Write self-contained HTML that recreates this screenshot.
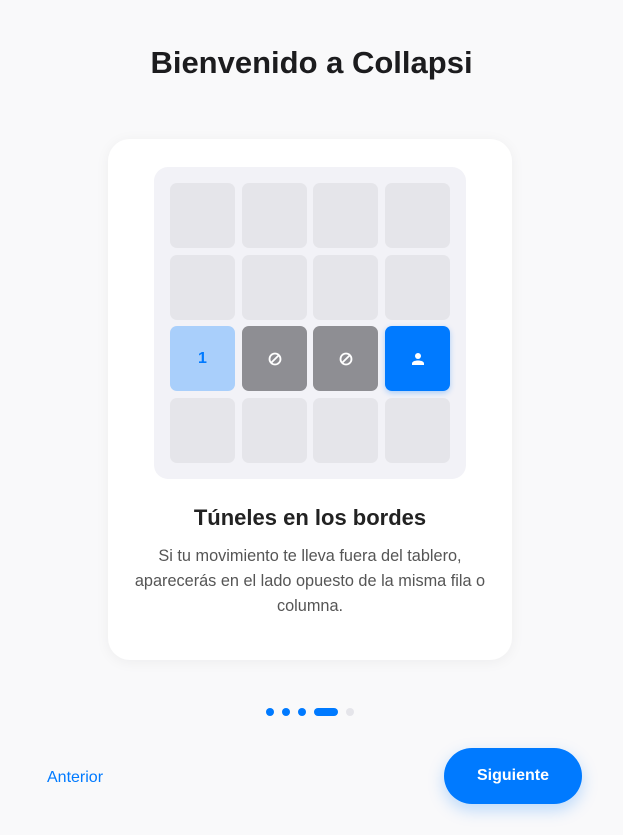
<!DOCTYPE html>
<html><head><meta charset="utf-8"><style>
*{margin:0;padding:0;box-sizing:border-box}
body{width:623px;height:835px;background:#f9f9fa;font-family:"Liberation Sans","DejaVu Sans",sans-serif;position:relative;overflow:hidden;color:#1c1c1e}
.title{position:absolute;top:45px;left:0;width:623px;text-align:center;font-size:31px;font-weight:bold}
.card{position:absolute;left:108px;top:139px;width:404px;height:521px;background:#fff;border-radius:22px;box-shadow:0 2px 14px rgba(0,0,0,0.05)}
.board{position:absolute;left:46px;top:28px;width:312px;height:312px;background:#f2f2f7;border-radius:14px}
.cell{position:absolute;width:65px;height:65px;border-radius:7px;background:#e5e5ea;display:flex;align-items:center;justify-content:center}
.h{position:absolute;top:366px;width:100%;text-align:center;font-size:22px;font-weight:bold;color:#222}
.p{position:absolute;top:405px;width:100%;text-align:center;font-size:16.3px;line-height:25px;color:#555}
.dot{position:absolute;top:708px;height:8px;width:8px;border-radius:4px;background:#007aff}
.prev{position:absolute;left:47px;top:769px;font-size:16px;color:#007aff}
.btn{position:absolute;left:444px;top:748px;width:138px;height:56px;border-radius:28px;background:#007aff;color:#fff;font-weight:bold;font-size:16px;display:flex;align-items:center;justify-content:center;box-shadow:0 6px 16px rgba(0,122,255,0.25)}
</style></head><body>
<div class="title">Bienvenido a Collapsi</div>
<div class="card">
<div class="board">
<div class="cell" style="left:16px;top:16px"></div><div class="cell" style="left:88px;top:16px"></div><div class="cell" style="left:159px;top:16px"></div><div class="cell" style="left:231px;top:16px"></div>
<div class="cell" style="left:16px;top:88px"></div><div class="cell" style="left:88px;top:88px"></div><div class="cell" style="left:159px;top:88px"></div><div class="cell" style="left:231px;top:88px"></div>
<div class="cell" style="left:16px;top:159px;background:#a9cffb;color:#007aff;font-weight:bold;font-size:16px">1</div>
<div class="cell" style="left:88px;top:159px;background:#8e8e93"><svg width="14" height="14" viewBox="0 0 14 14"><circle cx="7" cy="7" r="5.5" fill="none" stroke="#fff" stroke-width="1.8"/><path d="M3.2 10.8L10.8 3.2" stroke="#fff" stroke-width="1.8"/></svg></div>
<div class="cell" style="left:159px;top:159px;background:#8e8e93"><svg width="14" height="14" viewBox="0 0 14 14"><circle cx="7" cy="7" r="5.5" fill="none" stroke="#fff" stroke-width="1.8"/><path d="M3.2 10.8L10.8 3.2" stroke="#fff" stroke-width="1.8"/></svg></div>
<div class="cell" style="left:231px;top:159px;background:#007aff;box-shadow:0 2px 6px rgba(0,122,255,0.3)"><svg width="14" height="14" viewBox="0 0 14 14"><circle cx="7" cy="4" r="3" fill="#fff"/><path d="M1 13v-1.5C1 9.5 4 8.5 7 8.5s6 1 6 3V13z" fill="#fff"/></svg></div>
<div class="cell" style="left:16px;top:231px"></div><div class="cell" style="left:88px;top:231px"></div><div class="cell" style="left:159px;top:231px"></div><div class="cell" style="left:231px;top:231px"></div>
</div>
<div class="h">Túneles en los bordes</div>
<div class="p">Si tu movimiento te lleva fuera del tablero,<br>aparecerás en el lado opuesto de la misma fila o<br>columna.</div>
</div>
<div class="dot" style="left:266px"></div><div class="dot" style="left:282px"></div><div class="dot" style="left:298px"></div>
<div class="dot" style="left:314px;width:24px"></div><div class="dot" style="left:346px;background:#e5e5ea"></div>
<div class="prev">Anterior</div>
<div class="btn">Siguiente</div>
</body></html>
